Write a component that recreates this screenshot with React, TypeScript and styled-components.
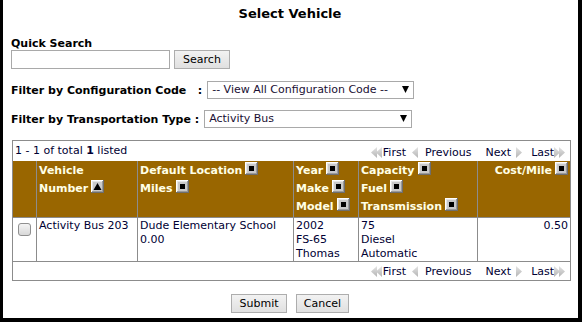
import React from "react";
import styled, { createGlobalStyle } from "styled-components";

const GlobalStyle = createGlobalStyle`
  html, body { margin: 0; padding: 0; background: #ffffff; }
  body {
    font-family: "DejaVu Sans", Verdana, sans-serif;
    font-size: 11px;
    color: #000000;
  }
  * { box-sizing: border-box; }
`;

const Frame = styled.div`
  width: 582px;
  height: 322px;
  background: #ffffff;
  border-left: 3px solid #000;
  border-right: 4px solid #000;
  border-bottom: 4px solid #000;
  display: flex;
  flex-direction: column;
`;

const Title = styled.div`
  margin-top: 6px;
  height: 16px;
  line-height: 16px;
  text-align: center;
  font-weight: bold;
  font-size: 13px;
  padding-right: 1px;
`;

const Form = styled.div`
  padding-left: 8px;
  display: flex;
  flex-direction: column;
`;

const FieldLabel = styled.div`
  margin-top: 15px;
  height: 13px;
  line-height: 13px;
  font-weight: bold;
`;

const SearchRow = styled.div`
  display: flex;
  align-items: center;
  gap: 4px;
  height: 19px;
`;

const TextInput = styled.input`
  width: 159px;
  height: 19px;
  border: 1px solid #a9a9a9;
  padding: 0 3px;
  font: inherit;
  outline: none;
`;

const Button = styled.button<{ $w: number }>`
  width: ${(p) => p.$w}px;
  height: 19px;
  padding: 0;
  border: 1px solid #adadad;
  background: linear-gradient(#f2f2f2, #e0e0e0);
  font-family: "DejaVu Sans", Verdana, sans-serif;
  font-size: 11px;
  color: #000;
  line-height: 17px;
`;

const FilterRow = styled.div<{ $top: number }>`
  margin-top: ${(p) => p.$top}px;
  display: flex;
  align-items: center;
  gap: 5px;
  height: 18px;
`;

const FilterLabel = styled.span`
  font-weight: bold;
  white-space: pre;
`;

const SelectWrap = styled.div<{ $w: number }>`
  position: relative;
  width: ${(p) => p.$w}px;
  height: 18px;
`;

const Select = styled.select`
  appearance: none;
  -webkit-appearance: none;
  width: 100%;
  height: 18px;
  border: 1px solid #a9a9a9;
  border-radius: 0;
  background: #fff;
  padding: 0 0 0 4px;
  font-family: "DejaVu Sans", Verdana, sans-serif;
  font-size: 11px;
  color: #1a0f33;
  line-height: 16px;
  outline: none;
`;

const SelectArrow = styled.svg`
  position: absolute;
  right: 5px;
  top: 5px;
  pointer-events: none;
`;

const Grid = styled.table`
  margin: 12px 0 0 9px;
  width: 559px;
  table-layout: fixed;
  border-collapse: collapse;
  border: 1px solid #8c8c8c;
  font-size: 11px;
`;

const InfoCell = styled.td`
  height: 20px;
  padding: 0 4px 0 2px;
  color: #000033;
  vertical-align: middle;
`;

const InfoBar = styled.div`
  display: flex;
  align-items: center;
  justify-content: space-between;
`;

const Pager = styled.div<{ $drop: number }>`
  display: flex;
  align-items: center;
  color: #000033;
  padding-top: ${(p) => p.$drop}px;
`;

const PagerItem = styled.span<{ $gap: number }>`
  display: inline-flex;
  align-items: center;
  margin-left: ${(p) => p.$gap}px;
`;

const HeadRow = styled.tr`
  background: #996600;
`;

const HeadCell = styled.th<{ $right?: boolean }>`
  height: 56px;
  padding: 1px 2px 1px 2px;
  border: 1px solid #8c8c8c;
  border-top: none;
  color: #ffffe6;
  font-weight: bold;
  text-align: ${(p) => (p.$right ? "right" : "left")};
  vertical-align: top;
  line-height: 18px;
  white-space: nowrap;
`;

const DataCell = styled.td<{ $right?: boolean }>`
  height: 41px;
  padding: 1px 2px 0 2px;
  border: 1px solid #8c8c8c;
  color: #000033;
  text-align: ${(p) => (p.$right ? "right" : "left")};
  vertical-align: top;
  line-height: 14px;
  white-space: nowrap;
`;

const CheckCell = styled(DataCell)`
  padding: 5px 0 0 5px;
`;

const Check = styled.input`
  appearance: none;
  -webkit-appearance: none;
  margin: 0;
  width: 13px;
  height: 13px;
  border: 1px solid #8f8f8f;
  border-radius: 3px;
  background: linear-gradient(#f4f4f4, #d8d8d8);
  display: block;
`;

const PagerCell = styled.td`
  height: 19px;
  padding: 0 4px 0 2px;
  border-top: 1px solid #8c8c8c;
`;

const PagerEnd = styled.div`
  display: flex;
  justify-content: flex-end;
`;

const Actions = styled.div`
  margin-top: 13px;
  display: flex;
  justify-content: center;
  gap: 9px;
  padding-right: 1px;
`;

const SortIcon = ({ up }: { up?: boolean }) => (
  <svg width="13" height="13" viewBox="0 0 13 13" style={{ verticalAlign: "-1px", marginLeft: 3 }}>
    <rect x="0" y="0" width="13" height="13" fill="#6e6e6e" />
    <rect x="0" y="0" width="12" height="12" fill="#ffffff" />
    <rect x="1" y="1" width="11" height="11" fill="#9a9a9a" />
    <rect x="1" y="1" width="10" height="10" fill="#e6e6e6" />
    <rect x="2" y="2" width="9" height="9" fill="#c9c9c9" />
    {up ? (
      <polygon points="6.5,3 10.5,10 2.5,10" fill="#000" />
    ) : (
      <rect x="4" y="4" width="5" height="5" fill="#000" />
    )}
  </svg>
);

const Arrow = ({ dir, double }: { dir: "l" | "r"; double?: boolean }) => {
  const w = double ? 12 : 7;
  const tri = (x: number) =>
    dir === "l"
      ? `${x + 6},0 ${x},5.5 ${x + 6},11`
      : `${x},0 ${x + 6},5.5 ${x},11`;
  return (
    <svg width={w} height="11" viewBox={`0 0 ${w} 11`}>
      <defs>
        <linearGradient id={`g${dir}`} x1="0" y1="0" x2="0" y2="1">
          <stop offset="0" stopColor="#e4e4e4" />
          <stop offset="1" stopColor="#b4b4b4" />
        </linearGradient>
      </defs>
      <polygon points={tri(0)} fill={`url(#g${dir})`} />
      {double && <polygon points={tri(5)} fill={`url(#g${dir})`} />}
    </svg>
  );
};

const PagerLinks = ({ drop }: { drop: number }) => (
  <Pager $drop={drop}>
    <Arrow dir="l" double />
    <span>First</span>
    <PagerItem $gap={6}>
      <Arrow dir="l" />
    </PagerItem>
    <PagerItem $gap={6}>Previous</PagerItem>
    <PagerItem $gap={14}>Next</PagerItem>
    <PagerItem $gap={5}>
      <Arrow dir="r" />
    </PagerItem>
    <PagerItem $gap={8}>Last</PagerItem>
    <Arrow dir="r" double />
  </Pager>
);

const DownTri = () => (
  <SelectArrow width="7" height="8" viewBox="0 0 7 8">
    <polygon points="0,0 7,0 3.5,7" fill="#000" />
  </SelectArrow>
);

export default function App() {
  return (
    <>
      <GlobalStyle />
      <Frame>
        <Title>Select Vehicle</Title>
        <Form>
          <FieldLabel>Quick Search</FieldLabel>
          <SearchRow>
            <TextInput type="text" />
            <Button $w={56}>Search</Button>
          </SearchRow>
          <FilterRow $top={12}>
            <FilterLabel>{"Filter by Configuration Code\u00a0\u00a0 :"}</FilterLabel>
            <SelectWrap $w={207}>
              <Select defaultValue="all">
                <option value="all">-- View All Configuration Code --</option>
              </Select>
              <DownTri />
            </SelectWrap>
          </FilterRow>
          <FilterRow $top={11}>
            <FilterLabel>Filter by Transportation Type :</FilterLabel>
            <SelectWrap $w={208}>
              <Select defaultValue="ab">
                <option value="ab">Activity Bus</option>
              </Select>
              <DownTri />
            </SelectWrap>
          </FilterRow>
        </Form>
        <Grid>
          <colgroup>
            <col style={{ width: 24 }} />
            <col style={{ width: 101 }} />
            <col style={{ width: 156 }} />
            <col style={{ width: 65 }} />
            <col style={{ width: 119 }} />
            <col style={{ width: 93 }} />
          </colgroup>
          <tbody>
            <tr>
              <InfoCell colSpan={6}>
                <InfoBar>
                  <span>
                    1 - 1 of total <b>1</b> listed
                  </span>
                  <PagerLinks drop={4} />
                </InfoBar>
              </InfoCell>
            </tr>
            <HeadRow>
              <HeadCell />
              <HeadCell>
                Vehicle
                <br />
                Number
                <SortIcon up />
              </HeadCell>
              <HeadCell>
                Default Location
                <SortIcon />
                <br />
                Miles
                <SortIcon />
              </HeadCell>
              <HeadCell>
                Year
                <SortIcon />
                <br />
                Make
                <SortIcon />
                <br />
                Model
                <SortIcon />
              </HeadCell>
              <HeadCell>
                Capacity
                <SortIcon />
                <br />
                Fuel
                <SortIcon />
                <br />
                Transmission
                <SortIcon />
              </HeadCell>
              <HeadCell $right>
                Cost/Mile
                <SortIcon />
              </HeadCell>
            </HeadRow>
            <tr>
              <CheckCell>
                <Check type="checkbox" />
              </CheckCell>
              <DataCell>Activity Bus 203</DataCell>
              <DataCell>
                Dude Elementary School
                <br />
                0.00
              </DataCell>
              <DataCell>
                2002
                <br />
                FS-65
                <br />
                Thomas
              </DataCell>
              <DataCell>
                75
                <br />
                Diesel
                <br />
                Automatic
              </DataCell>
              <DataCell $right>0.50</DataCell>
            </tr>
            <tr>
              <PagerCell colSpan={6}>
                <PagerEnd>
                  <PagerLinks drop={1} />
                </PagerEnd>
              </PagerCell>
            </tr>
          </tbody>
        </Grid>
        <Actions>
          <Button $w={56}>Submit</Button>
          <Button $w={53}>Cancel</Button>
        </Actions>
      </Frame>
    </>
  );
}
